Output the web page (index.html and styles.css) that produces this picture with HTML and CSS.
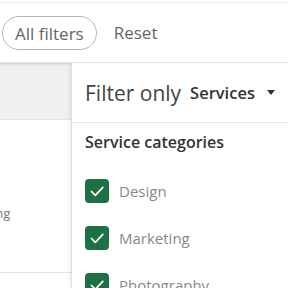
FILE: index.html
```html
<!DOCTYPE html>
<html lang="en">
<head>
    <meta charset="UTF-8">
    <title>Filters</title>
    <link rel="stylesheet" href="styles.css">
</head>
<body>
    <header class="toolbar">
        <button class="pill">All filters</button>
        <button class="link">Reset</button>
    </header>
    <div class="content">
        <div class="results">
            <div class="results-head"></div>
            <div class="result-row"><span class="result-text">Marketing</span></div>
        </div>
        <aside class="panel">
            <div class="panel-head">
                <span class="panel-title">Filter only</span>
                <span class="panel-select">Services <span class="caret"></span></span>
            </div>
            <div class="panel-body">
                <h3>Service categories</h3>
                <label class="check"><span class="box"><svg viewBox="0 0 24 24" width="24" height="24"><path d="M6.5 12.5l3.8 3.8 7.5-8" fill="none" stroke="#fff" stroke-width="1.7" stroke-linecap="round" stroke-linejoin="round"/></svg></span>Design</label>
                <label class="check"><span class="box"><svg viewBox="0 0 24 24" width="24" height="24"><path d="M6.5 12.5l3.8 3.8 7.5-8" fill="none" stroke="#fff" stroke-width="1.7" stroke-linecap="round" stroke-linejoin="round"/></svg></span>Marketing</label>
                <label class="check"><span class="box"><svg viewBox="0 0 24 24" width="24" height="24"><path d="M6.5 12.5l3.8 3.8 7.5-8" fill="none" stroke="#fff" stroke-width="1.7" stroke-linecap="round" stroke-linejoin="round"/></svg></span>Photography</label>
            </div>
        </aside>
    </div>
</body>
</html>
```

FILE: styles.css
```css
body {
    margin: 0;
    font-family: "Open Sans", "Noto Sans", sans-serif;
    color: #444;
    background: #fff;
    overflow: hidden;
    height: 288px;
}
.toolbar {
    height: 59px;
    border-top: 1px solid #ececec;
    margin-top: 2px;
    border-bottom: 1px solid #e6e6e6;
    display: flex;
    align-items: center;
    padding-left: 2px;
    gap: 17px;
}
.pill {
    font-family: inherit;
    font-size: 17px;
    color: #666;
    background: #fff;
    border: 1px solid #b5b5b5;
    border-radius: 17px;
    height: 34px;
    padding: 0 12px;
    margin-top: 1px;
}
.link {
    font-family: inherit;
    font-size: 17px;
    color: #666;
    background: none;
    border: none;
    padding: 0;
}
.content {
    display: flex;
    height: 226px;
    overflow: hidden;
}
.results {
    width: 71px;
    flex-shrink: 0;
}
.results-head {
    height: 56px;
    background: #f0f0f0;
    box-shadow: inset 0 3px 3px -2px rgba(0, 0, 0, 0.15);
    border-bottom: 1px solid #e4e4e4;
}
.result-row {
    height: 152px;
    border-bottom: 1px solid #e4e4e4;
    display: flex;
    align-items: center;
    overflow: hidden;
}
.result-text {
    font-size: 13px;
    color: #777;
    margin-left: -51px;
    margin-top: 34px;
}
.panel {
    flex: 1;
    border-left: 1px solid #e0e0e0;
    box-shadow: -2px 0 3px rgba(0, 0, 0, 0.06);
    background: #fff;
}
.panel-head {
    height: 59px;
    border-bottom: 1px solid #e6e6e6;
    display: flex;
    align-items: center;
    padding-left: 13px;
    gap: 9px;
}
.panel-title {
    font-size: 21px;
    color: #444;
}
.panel-select {
    font-size: 16.5px;
    font-weight: 600;
    color: #333;
    display: flex;
    align-items: center;
    gap: 12px;
}
.caret {
    width: 0;
    height: 0;
    border-left: 4px solid transparent;
    border-right: 4px solid transparent;
    border-top: 5px solid #333;
}
.panel-body {
    padding: 8px 13px;
}
.panel-body h3 {
    margin: 0 0 26px;
    font-size: 16px;
    font-weight: 600;
    color: #333;
}
.check {
    display: flex;
    align-items: center;
    gap: 10px;
    font-size: 15px;
    color: #888;
    margin-bottom: 23px;
}
.box {
    width: 24px;
    height: 24px;
    border-radius: 4px;
    background: #1e7145;
    display: flex;
}
```
